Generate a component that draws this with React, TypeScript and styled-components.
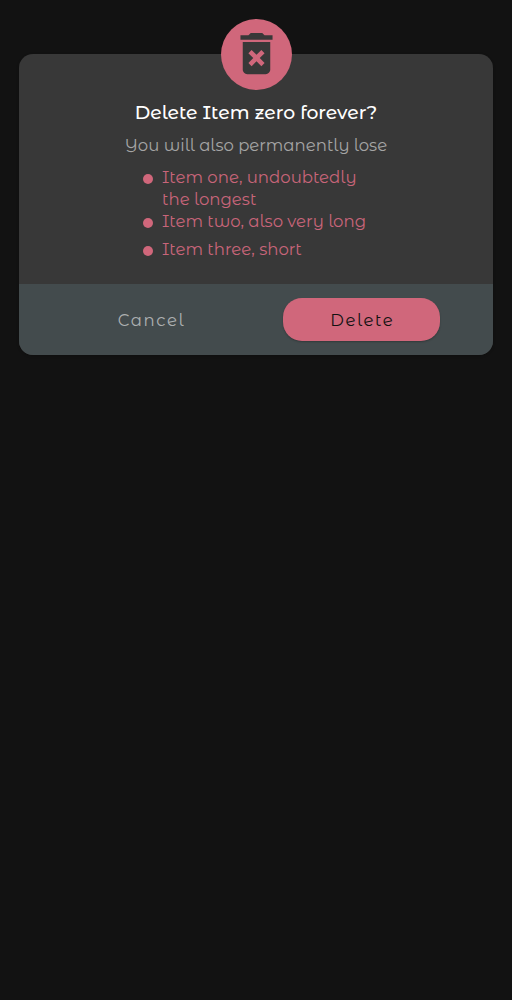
import React from "react";
import styled, { createGlobalStyle } from "styled-components";

const fontStack = `"Montserrat Alternates", Inter, "Open Sans", sans-serif`;

const GlobalStyle = createGlobalStyle`
  * { box-sizing: border-box; }
  body {
    margin: 0;
    background: #121212;
    font-family: ${fontStack};
  }
`;

const Page = styled.main`
  min-height: 1000px;
  padding: 54.3px 18.8px 0;
  background: #121212;
`;

const Dialog = styled.section`
  display: flex;
  flex-direction: column;
  height: 300.3px;
  border-radius: 14px;
  background: #383838;
  box-shadow: 0 1px 3px rgba(0, 0, 0, 0.2);
`;

const Badge = styled.div`
  display: flex;
  align-items: center;
  justify-content: center;
  align-self: center;
  width: 71px;
  height: 71px;
  margin-top: -35.8px;
  border-radius: 50%;
  background: #d0677b;
`;

const Content = styled.div`
  display: flex;
  flex-direction: column;
  align-items: center;
  flex: 1;
  padding-top: 10.4px;
`;

const Line = styled.span`
  display: block;
  white-space: nowrap;
`;

const Title = styled.h1`
  margin: 0;
  color: #fff;
  font-size: 18.75px;
  font-weight: 500;
  line-height: 26px;
`;

const Subtitle = styled.p`
  margin: 7px 0 0;
  color: #a5a5a5;
  font-size: 16.5px;
  line-height: 24px;
`;

const List = styled.ul`
  width: 226px;
  margin: 9px 0 0;
  padding: 0;
  list-style: none;
`;

const Item = styled.li<{ $gap: number }>`
  display: flex;
  gap: 9px;
  margin-bottom: ${(p) => p.$gap}px;
  color: #c8657a;
  font-size: 16.55px;
  line-height: 22px;
`;

const Bullet = styled.i`
  flex: none;
  width: 10px;
  height: 10px;
  margin-top: 8px;
  border-radius: 50%;
  background: #d0677b;
`;

const Footer = styled.footer`
  display: flex;
  align-items: center;
  justify-content: space-between;
  height: 70.6px;
  padding: 0 53.5px;
  border-radius: 0 0 14px 14px;
  background: #434b4d;
`;

const Button = styled.button<{ $primary?: boolean }>`
  display: flex;
  align-items: center;
  justify-content: center;
  width: 156.6px;
  height: 42.6px;
  padding: 2px 0 0 1.8px;
  border: 0;
  border-radius: 19px;
  background: ${(p) => (p.$primary ? "#d0677b" : "transparent")};
  box-shadow: ${(p) => (p.$primary ? "0 1px 2px rgba(0, 0, 0, 0.25)" : "none")};
  color: ${(p) => (p.$primary ? "#121212" : "#adb0b1")};
  font: 400 16.5px ${fontStack};
  letter-spacing: 1.6px;
`;

const Trash = styled.svg`
  display: block;
  width: 55px;
  height: 55px;
  margin-top: -1px;
  fill: #383838;
`;

const TrashIcon = () => (
  <Trash viewBox="0 0 24 24" aria-hidden="true">
    <path d="M6 19c0 1.1.9 2 2 2h8c1.1 0 2-.9 2-2V7H6v12zm2.46-7.12l1.41-1.41L12 12.59l2.12-2.12 1.41 1.41L13.41 14l2.12 2.12-1.41 1.41L12 15.41l-2.12 2.12-1.41-1.41L10.59 14l-2.13-2.12zM15.5 4l-1-1h-5l-1 1H5v2h14V4z" />
  </Trash>
);

const items = [
  { lines: ["Item one, undoubtedly", "the longest"], gap: 0 },
  { lines: ["Item two, also very long"], gap: 6 },
  { lines: ["Item three, short"], gap: 0 },
];

export default function App() {
  return (
    <Page>
      <GlobalStyle />
      <Dialog role="dialog">
        <Badge>
          <TrashIcon />
        </Badge>
        <Content>
          <Title>Delete Item zero forever?</Title>
          <Subtitle>You will also permanently lose</Subtitle>
          <List>
            {items.map((item) => (
              <Item key={item.lines[0]} $gap={item.gap}>
                <Bullet />
                <div>
                  {item.lines.map((line) => (
                    <Line key={line}>{line}</Line>
                  ))}
                </div>
              </Item>
            ))}
          </List>
        </Content>
        <Footer>
          <Button>Cancel</Button>
          <Button $primary>Delete</Button>
        </Footer>
      </Dialog>
    </Page>
  );
}
